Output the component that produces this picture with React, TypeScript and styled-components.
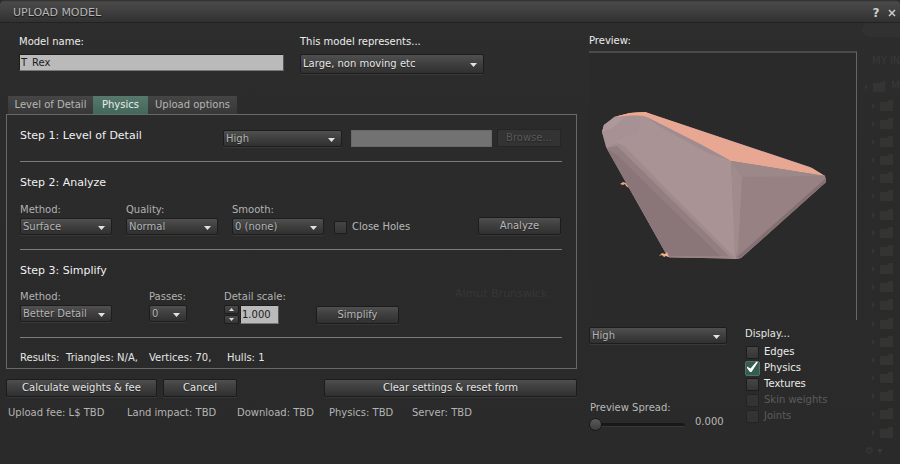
import React, { useState } from "react";
import styled, { createGlobalStyle, css } from "styled-components";

const GlobalStyle = createGlobalStyle`
  *, *::before, *::after { box-sizing: border-box; }
  body { margin: 0; background: #2b2b2b; }
  button, input, select { font: inherit; color: inherit; margin: 0; }
`;

const Floater = styled.div`
  min-height: 100vh;
  display: flex;
  flex-direction: column;
  overflow: hidden;
  background: linear-gradient(#2e2d2d, #2b2b2b 30%, #2a2a2a);
  border-radius: 5px 5px 0 0;
  color: #e4e4e4;
  font: 10px/14px "DejaVu Sans", Verdana, sans-serif;
`;

const TitleBar = styled.header`
  height: 23px;
  display: flex;
  align-items: center;
  gap: 4px;
  padding: 3px 2px 0 13px;
  background: linear-gradient(#2f2c2b, #4a4949 2px, #434242 40%, #313131);
  border-bottom: 1px solid #222;
`;

const Title = styled.h1`
  flex: 1;
  margin: 0;
  font-size: 11px;
  font-weight: 400;
  color: #b9b9b9;
  text-shadow: 0 1px 1px #111;
`;

const TitleButton = styled.button`
  width: 12px;
  height: 14px;
  padding: 0;
  display: grid;
  place-items: center;
  border: 0;
  background: none;
  color: #d0d0d0;
  font-size: 12px;
  font-weight: 700;
`;

const Body = styled.div`
  flex: 1;
  display: grid;
  grid-template-columns: minmax(0, 1fr) 268px 43px;
  padding-left: 6px;
`;

const Settings = styled.main`
  min-width: 0;
  padding: 12px 12px 0 0;
`;

const TopFields = styled.div`
  display: flex;
  gap: 15px;
  padding: 0 0 0 13px;
`;

const Field = styled.div<{ $width?: number }>`
  display: flex;
  flex-direction: column;
  gap: 1px;
  ${(p) => p.$width && css`width: ${p.$width}px;`}
`;

const Label = styled.label<{ $dim?: boolean }>`
  color: ${(p) => (p.$dim ? "#b2b2b2" : "#ececec")};
`;

const TextInput = styled.input<{ $width: number }>`
  width: ${(p) => p.$width}px;
  height: 17px;
  padding: 0 1px 1px;
  border: 1px solid #1e1e1e;
  border-right-color: #555;
  border-bottom-color: #777;
  border-radius: 0;
  background: #bababa;
  color: #1c1c1c;
  line-height: 14px;
  outline: 0;
  &:disabled { background: #727272; border-color: #696969; }
`;

const SelectBox = styled.div<{ $width: number; $tall?: boolean }>`
  display: grid;
  align-items: center;
  width: ${(p) => p.$width}px;
  height: ${(p) => (p.$tall ? 20 : 17)}px;
  border: 1px solid #1d1d1d;
  border-radius: 2px;
  background: linear-gradient(#505050, #424242 40%, #303030);
  box-shadow: 0 1px 0 #393939;
  & > * { grid-area: 1 / 1; }
`;

const NativeSelect = styled.select<{ $bright?: boolean }>`
  appearance: none;
  width: 100%;
  height: 100%;
  padding: 0 16px 0 2px;
  border: 0;
  background: transparent;
  color: ${(p) => (p.$bright ? "#e6e6e6" : "#b5b5b5")};
  text-shadow: 0 1px 1px #222;
  outline: 0;
`;

const Arrow = styled.svg`
  justify-self: end;
  margin: 2px 6px 0 0;
  pointer-events: none;
`;

const Button = styled.button<{ $width: number; $bright?: boolean }>`
  height: 18px;
  width: ${(p) => p.$width}px;
  padding: 0 0 1px;
  border: 1px solid #1c1c1c;
  border-radius: 2px;
  background: linear-gradient(#505050, #424242 35%, #303030);
  box-shadow: 0 1px 0 #363636;
  color: ${(p) => (p.$bright ? "#e6e6e6" : "#b8b8b8")};
  text-shadow: 0 1px 1px #222;
  white-space: nowrap;
  &:disabled { color: #595959; background: #333; border-color: #252525; box-shadow: none; }
`;

const Tabs = styled.div`
  display: flex;
  margin: 22px 0 0 2px;
`;

const Tab = styled.button<{ $width: number }>`
  width: ${(p) => p.$width}px;
  height: 18px;
  padding: 0;
  border: 0;
  background: linear-gradient(#454545, #373737);
  color: #b5b5b5;
  white-space: nowrap;
  &[aria-selected="true"] { background: linear-gradient(#56796c, #42685b); color: #ececec; }
`;

const Panel = styled.section`
  border: 1px solid #686868;
  padding: 0 14px 3px 13px;
`;

const Step = styled.section<{ $height: number }>`
  height: ${(p) => p.$height}px;
  border-bottom: 1px solid #7b7b7b;
`;

const StepTitle = styled.h2<{ $width?: number }>`
  align-self: flex-start;
  margin: 0;
  padding-top: 13px;
  font-size: 11px;
  line-height: 16px;
  font-weight: 400;
  color: #f0f0f0;
  ${(p) => p.$width && css`width: ${p.$width}px;`}
`;

const Row = styled.div<{ $gap: number; $top?: number; $height?: number; $align?: string }>`
  display: flex;
  align-items: ${(p) => p.$align ?? "flex-end"};
  gap: ${(p) => p.$gap}px;
  min-height: ${(p) => p.$height ?? 0}px;
  padding: ${(p) => p.$top ?? 0}px 1px 0 0;
`;

const SourceRow = styled.div`
  flex: 1;
  display: flex;
  justify-content: flex-end;
  gap: 5px;
  align-items: center;
`;

const Push = styled.div`
  margin-left: auto;
  display: flex;
`;

const AlignEnd = styled.div`
  align-self: flex-end;
  display: flex;
`;

const Spinner = styled.div`
  display: flex;
  gap: 1px;
`;

const SpinButtons = styled.div`
  display: grid;
  width: 15px;
  gap: 1px;
`;

const SpinButton = styled.button`
  display: grid;
  place-items: center;
  height: 9px;
  padding: 0;
  border: 1px solid #1d1d1d;
  border-radius: 2px;
  background: linear-gradient(#4a4a4a, #353535);
`;

const SpinInput = styled(TextInput)`
  height: 19px;
`;

const Results = styled.div`
  display: flex;
  padding: 13px 0 0;
  color: #e6e6e6;
`;

const Cell = styled.span<{ $width: number }>`
  width: ${(p) => p.$width}px;
  white-space: nowrap;
`;

const Actions = styled.div`
  display: flex;
  justify-content: space-between;
  padding-top: 10px;
`;

const ActionGroup = styled.div`
  display: flex;
  gap: 6px;
`;

const Status = styled.footer`
  display: flex;
  padding: 9px 0 0 2px;
  color: #b4b4b4;
`;

const PreviewColumn = styled.section`
  padding-top: 11px;
`;

const PreviewFrame = styled.div`
  margin-top: 3px;
  height: 269px;
  border: solid #666;
  border-width: 2px 1px 0 0;
  border-top-color: #4a4a4a;
  background: #2a2a2a;
`;

const Model = styled.svg`
  display: block;
  width: 100%;
  height: 100%;
`;

const PreviewControls = styled.div`
  display: flex;
  justify-content: space-between;
  padding-top: 7px;
`;

const PreviewLeft = styled.div`
  display: flex;
  flex-direction: column;
  gap: 57px;
  width: 137px;
`;

const Spread = styled.div`
  display: grid;
  grid-template-columns: 96px 1fr;
  column-gap: 10px;
  color: #b8b8b8;
`;

const SpreadLabel = styled.label`
  grid-column: 1 / -1;
  padding-left: 1px;
`;

const Slider = styled.input`
  appearance: none;
  width: 96px;
  height: 14px;
  margin: 3px 0 0;
  background: transparent;
  &::-webkit-slider-runnable-track {
    height: 4px;
    border-radius: 2px;
    background: #181818;
    border-bottom: 1px solid #383838;
  }
  &::-webkit-slider-thumb {
    appearance: none;
    width: 13px;
    height: 13px;
    margin-top: -5px;
    border: 1px solid #191919;
    border-radius: 50%;
    background: linear-gradient(#5a5a5a, #3d3d3d);
  }
`;

const Display = styled.fieldset`
  width: 113px;
  margin: 0;
  padding: 0;
  border: 0;
`;

const Legend = styled.legend`
  padding: 0 0 3px 1px;
  line-height: 14px;
`;

const Check = styled.label<{ $tone?: "dim" | "off" }>`
  display: grid;
  grid-template-columns: 16px auto;
  justify-content: start;
  align-items: center;
  column-gap: 4px;
  height: 16px;
  color: ${(p) => (p.$tone === "off" ? "#5c5c5c" : p.$tone === "dim" ? "#b8b8b8" : "#ececec")};
`;

const Box = styled.input`
  grid-area: 1 / 1;
  justify-self: center;
  appearance: none;
  width: 13px;
  height: 13px;
  border: 1px solid #1c1c1c;
  border-radius: 1px;
  background: linear-gradient(#454545, #363636);
  &:checked { width: 15px; height: 15px; border-radius: 2px; border-color: #4f7465; background: #375b4e; }
  &:disabled { border-color: #242424; background: #333; }
`;

const Tick = styled.svg`
  grid-area: 1 / 1;
  z-index: 1;
  pointer-events: none;
`;

const Caption = styled.span`
  grid-area: 1 / 2;
`;

const Backdrop = styled.aside`
  display: flex;
  flex-direction: column;
  justify-content: space-between;
  padding: 0 0 6px 5px;
  overflow: hidden;
  color: #393938;
  white-space: nowrap;
`;

const BackdropSearch = styled.div`
  height: 14px;
  flex: none;
  border-radius: 7px 0 0 7px;
  background: #313131;
`;

const BackdropHeading = styled.div`
  padding: 12px 0 6px 10px;
`;

const BackdropRow = styled.div<{ $open?: boolean }>`
  display: flex;
  align-items: center;
  gap: 3px;
  padding-left: ${(p) => (p.$open ? 3 : 10)}px;
`;

const Ghost = styled.span`
  position: absolute;
  left: 455px;
  top: 287px;
  color: #373636;
  font-size: 11px;
  pointer-events: none;
`;

function Dropdown({ id, label, value, width, tall, bright }: {
  id: string; label?: string; value: string; width: number; tall?: boolean; bright?: boolean;
}) {
  return (
    <SelectBox $width={width} $tall={tall}>
      <NativeSelect id={id} aria-label={label} $bright={bright} defaultValue={value}>
        <option>{value}</option>
      </NativeSelect>
      <Arrow width="7" height="4" viewBox="0 0 7 4" aria-hidden="true">
        <path d="M0 0h7L3.5 4z" fill="#e2e2e2" />
      </Arrow>
    </SelectBox>
  );
}

function LabeledDropdown({ id, label, value, width }: {
  id: string; label: string; value: string; width: number;
}) {
  return (
    <Field $width={width}>
      <Label htmlFor={id} $dim>{label}</Label>
      <Dropdown id={id} value={value} width={width} />
    </Field>
  );
}

function CheckItem({ label, initial = false, tone }: { label: string; initial?: boolean; tone?: "dim" | "off" }) {
  const [on, setOn] = useState(initial);
  return (
    <Check $tone={tone}>
      <Box type="checkbox" checked={on} disabled={tone === "off"} onChange={(e) => setOn(e.target.checked)} />
      {on && (
        <Tick width="16" height="16" viewBox="0 0 16 16" aria-hidden="true">
          <path d="M3 6.5L6.5 8.5L12.5 1.5L14 2L7.5 12H6L3 8z" fill="#fff" />
        </Tick>
      )}
      <Caption>{label}</Caption>
    </Check>
  );
}

function HullModel() {
  return (
    <Model viewBox="589 53 267 267" role="img" aria-label="Physics hull of the model">
      <path d="M602 132L604 125L614 117L630 113L645 112L810 167L825 176L826 182L741 258L736 259L668 257L606 147Z" fill="#a99394" />
      <path d="M614 117L630 113L645 112L812 168L825 176L731 161L700 144L660 124L644 116L630 115Z" fill="#e8a793" />
      <path d="M614 117L630 113L645 112L650 114L636 115Z" fill="#f0a78c" />
      <path d="M602 132L604 125L614 118L640 116L638 134L622 138L607 148Z" fill="#a69194" />
      <path d="M604 125L614 118L625 117L612 128L602 132Z" fill="#ad999b" />
      <path d="M607 148L616 143L623 145L735 258L668 257Z" fill="#a08a8c" />
      <path d="M607 148L617 146L731 258L668 257Z" fill="#927d80" />
      <path d="M607 149L617 155L722 258L668 257Z" fill="#8a7678" />
      <path d="M645 116L700 144L731 161L708 153L660 127Z" fill="#a08c90" />
      <path d="M731 161L825 176L826 182L741 258L736 259Z" fill="#978183" />
      <path d="M731 161L742 177L738 252L735 258Z" fill="#a08b8d" />
      <path d="M731 161L825 176L742 177Z" fill="#9c8789" />
      <path d="M825 179L826 182L741 258L737 257Z" fill="#846f72" />
      <path d="M620 184l3-2 3 1 3 5-3-2-1-2-2 1z" fill="#e9a685" />
      <path d="M659 256l3-3 3 1 2-2 2 5-3-1-2 1-2-2z" fill="#edb18d" />
      <path d="M669 257h66" stroke="#a18b8c" strokeWidth="1" />
    </Model>
  );
}

function FolderGlyph() {
  return (
    <svg width="24" height="13" viewBox="0 0 24 13" aria-hidden="true">
      <path d="M0 4l3 3-3 3z" fill="#353534" />
      <path d="M8 3h7l2-2h4v11H8z" fill="#343433" />
    </svg>
  );
}

export default function App() {
  const [spread, setSpread] = useState(0);
  return (
    <Floater>
      <GlobalStyle />
      <TitleBar>
        <Title>UPLOAD MODEL</Title>
        <TitleButton aria-label="Help">?</TitleButton>
        <TitleButton aria-label="Close">
          <svg width="8" height="8" viewBox="0 0 8 8" aria-hidden="true">
            <path d="M1 1l6 6M7 1L1 7" stroke="#c8c8c8" strokeWidth="1.6" />
          </svg>
        </TitleButton>
      </TitleBar>
      <Body>
        <Settings>
          <TopFields>
            <Field $width={266}>
              <Label htmlFor="name">Model name:</Label>
              <Row $gap={0} $top={4}>
                <TextInput id="name" $width={267} defaultValue="T_Rex" />
              </Row>
            </Field>
            <Field>
              <Label htmlFor="kind">This model represents...</Label>
              <Row $gap={0} $top={4}>
                <Dropdown id="kind" value="Large, non moving etc" width={184} tall bright />
              </Row>
            </Field>
          </TopFields>
          <Tabs role="tablist">
            <Tab role="tab" aria-selected="false" $width={85}>Level of Detail</Tab>
            <Tab role="tab" aria-selected="true" $width={55}>Physics</Tab>
            <Tab role="tab" aria-selected="false" $width={89}>Upload options</Tab>
          </Tabs>
          <Panel role="tabpanel">
            <Step $height={47}>
              <Row $gap={0} $height={32}>
                <StepTitle $width={203}>Step 1: Level of Detail</StepTitle>
                <Dropdown id="source" label="Level of detail" value="High" width={119} />
                <SourceRow>
                  <TextInput $width={141} disabled aria-label="Physics file" />
                  <Button $width={64} disabled>Browse...</Button>
                </SourceRow>
              </Row>
            </Step>
            <Step $height={88}>
              <StepTitle>Step 2: Analyze</StepTitle>
              <Row $gap={7} $top={12}>
                <Row $gap={14}>
                  <LabeledDropdown id="method" label="Method:" value="Surface" width={92} />
                  <LabeledDropdown id="quality" label="Quality:" value="Normal" width={92} />
                  <LabeledDropdown id="smooth" label="Smooth:" value="0 (none)" width={92} />
                </Row>
                <CheckItem label="Close Holes" tone="dim" />
                <Push>
                  <Button $width={83}>Analyze</Button>
                </Push>
              </Row>
            </Step>
            <Step $height={88}>
              <StepTitle>Step 3: Simplify</StepTitle>
              <Row $gap={37} $top={11} $align="flex-start">
                <LabeledDropdown id="simplify" label="Method:" value="Better Detail" width={92} />
                <LabeledDropdown id="passes" label="Passes:" value="0" width={38} />
                <Field $width={55}>
                  <Cell $width={55}>
                    <Label htmlFor="scale" $dim>Detail scale:</Label>
                  </Cell>
                  <Spinner>
                    <SpinButtons>
                      <SpinButton aria-label="Increase">
                        <svg width="5" height="3" viewBox="0 0 5 3"><path d="M0 3h5L2.5 0z" fill="#ddd" /></svg>
                      </SpinButton>
                      <SpinButton aria-label="Decrease">
                        <svg width="5" height="3" viewBox="0 0 5 3"><path d="M0 0h5L2.5 3z" fill="#ddd" /></svg>
                      </SpinButton>
                    </SpinButtons>
                    <SpinInput id="scale" $width={39} defaultValue="1.000" inputMode="decimal" />
                  </Spinner>
                </Field>
                <AlignEnd>
                  <Button $width={83}>Simplify</Button>
                </AlignEnd>
              </Row>
            </Step>
            <Results>
              <Cell $width={46}>Results:</Cell>
              <Cell $width={83}>Triangles: N/A,</Cell>
              <Cell $width={78}>Vertices: 70,</Cell>
              <Cell $width={60}>Hulls: 1</Cell>
            </Results>
          </Panel>
          <Actions>
            <ActionGroup>
              <Button $width={151} $bright>Calculate weights &amp; fee</Button>
              <Button $width={74} $bright>Cancel</Button>
            </ActionGroup>
            <Button $width={253} $bright>Clear settings &amp; reset form</Button>
          </Actions>
          <Status>
            <Cell $width={119}>Upload fee: L$ TBD</Cell>
            <Cell $width={110}>Land impact: TBD</Cell>
            <Cell $width={92}>Download: TBD</Cell>
            <Cell $width={83}>Physics: TBD</Cell>
            <Cell $width={70}>Server: TBD</Cell>
          </Status>
        </Settings>
        <PreviewColumn>
          <Label as="div">Preview:</Label>
          <PreviewFrame>
            <HullModel />
          </PreviewFrame>
          <PreviewControls>
            <PreviewLeft>
              <Dropdown id="lod" label="Preview level of detail" value="High" width={138} />
              <Spread>
                <SpreadLabel htmlFor="spread">Preview Spread:</SpreadLabel>
                <Slider id="spread" type="range" min="0" max="5" step="0.1" value={spread}
                  onChange={(e) => setSpread(Number(e.target.value))} />
                <output htmlFor="spread">{spread.toFixed(3)}</output>
              </Spread>
            </PreviewLeft>
            <Display>
              <Legend>Display...</Legend>
              <CheckItem label="Edges" />
              <CheckItem label="Physics" initial />
              <CheckItem label="Textures" />
              <CheckItem label="Skin weights" tone="off" />
              <CheckItem label="Joints" tone="off" />
            </Display>
          </PreviewControls>
        </PreviewColumn>
        <Backdrop aria-hidden="true">
          <BackdropSearch />
          <BackdropHeading>MY IN</BackdropHeading>
          <BackdropRow $open><FolderGlyph />M</BackdropRow>
          {Array.from({ length: 19 }, (_, i) => (
            <BackdropRow key={i}><FolderGlyph /></BackdropRow>
          ))}
          <BackdropRow $open>⚙ ▾</BackdropRow>
        </Backdrop>
      </Body>
      <Ghost aria-hidden="true">Almut Brunswick</Ghost>
    </Floater>
  );
}
